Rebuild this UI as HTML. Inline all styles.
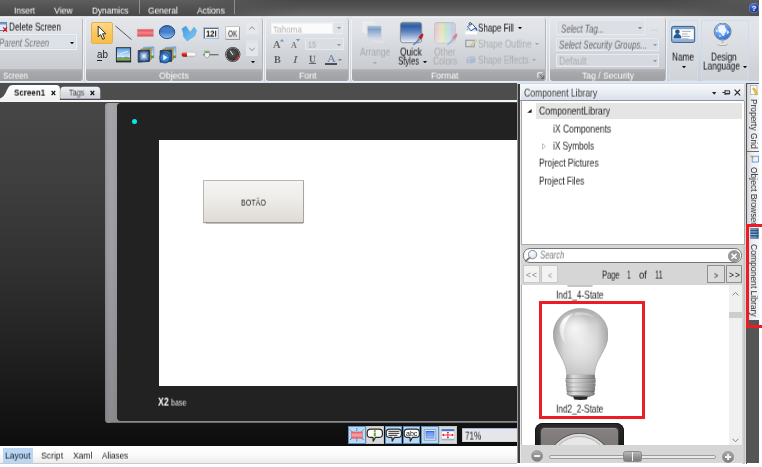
<!DOCTYPE html>
<html><head><meta charset="utf-8"><title>iX Developer</title>
<style>
*{box-sizing:border-box;margin:0;padding:0}
html,body{width:762px;height:467px;overflow:hidden;background:#fff;font-family:"Liberation Sans",sans-serif;font-size:10px;color:#000}
#root{position:relative;width:762px;height:467px;overflow:hidden;background:#fff}
.a{position:absolute;display:block}
.t{position:absolute;display:block;white-space:pre;transform-origin:0 50%;line-height:16px;will-change:transform}
</style></head><body>
<div id="root">
<div class="a" style="left:0px;top:0px;width:759px;height:16.6px;background:linear-gradient(#484848 0,#505051 35%,#626264 75%,#6e6e70 100%);"></div>
<div class="a" style="left:0px;top:0px;width:759px;height:16.6px;background:linear-gradient(#5e5e5e 0,#555 35%,#4c4c4c 75%,#484848 100%);-webkit-mask-image:linear-gradient(90deg,#000 0,#000 190px,rgba(0,0,0,0) 300px,rgba(0,0,0,0) 660px,rgba(0,0,0,0.8) 759px);mask-image:linear-gradient(90deg,#000 0,#000 190px,rgba(0,0,0,0) 300px,rgba(0,0,0,0) 660px,rgba(0,0,0,0.8) 759px)"></div>
<span class="t" style="left:14.00px;top:2.00px;font-size:9.5px;color:#fff;transform:scale(0.884,1.05);">Insert</span>
<span class="t" style="left:54.30px;top:2.00px;font-size:9.5px;color:#fff;transform:scale(0.916,1.05);">View</span>
<span class="t" style="left:92.30px;top:2.00px;font-size:9.5px;color:#fff;transform:scale(0.873,1.05);">Dynamics</span>
<span class="t" style="left:148.00px;top:2.00px;font-size:9.5px;color:#fff;transform:scale(0.882,1.05);">General</span>
<span class="t" style="left:197.20px;top:2.00px;font-size:9.5px;color:#fff;transform:scale(0.892,1.05);">Actions</span>
<div class="a" style="left:138.7px;top:0px;width:1px;height:13.5px;background:#8e8e8e;"></div>
<div class="a" style="left:234.2px;top:0px;width:1px;height:13.5px;background:#8e8e8e;"></div>
<svg class="a" style="left:749px;top:3px;" width="10" height="10" viewBox="0 0 10 10"><defs><radialGradient id="hg" cx="0.4" cy="0.3" r="0.8"><stop offset="0" stop-color="#5a7fe0"/><stop offset="0.6" stop-color="#1c3fb0"/><stop offset="1" stop-color="#0c2470"/></radialGradient></defs><circle cx="5" cy="5" r="4.8" fill="url(#hg)" stroke="#aab8e0" stroke-width="0.5"/><text x="5" y="8.2" font-size="8" font-weight="bold" text-anchor="middle" fill="#fff" font-family="Liberation Sans">?</text></svg>
<div class="a" style="left:0px;top:16.4px;width:759px;height:64.6px;background:linear-gradient(#d6dae0 0,#e3e6ea 2.5%,#e1e4e8 3%,#dfe2e6 30%,#d6d9de 60%,#cfd2d7 80%,#cdd0d5 100%);"></div>
<div class="a" style="left:0px;top:80.7px;width:759px;height:2.7px;background:#dbe5f4;"></div>
<div class="a" style="left:0px;top:83.3px;width:518px;height:16.5px;background:#4d4d4d;"></div>
<div class="a" style="left:0px;top:99.6px;width:517px;height:2.6px;background:#f4f4f4;"></div>
<svg class="a" style="left:0px;top:84px;" width="62" height="17" viewBox="0 0 62 17"><defs><linearGradient id="tg" x1="0" y1="0" x2="0" y2="1"><stop offset="0" stop-color="#fff"/><stop offset="1" stop-color="#f1f1f1"/></linearGradient></defs><path d="M0 14.5 C4 13 5 10 7.5 5 C9 1.8 10.5 0.9 13 0.9 L56 0.9 Q59.9 0.9 59.9 4.5 L59.9 17 L0 17 Z" fill="url(#tg)"/></svg>
<span class="t" style="left:14.40px;top:84.00px;font-size:9.5px;color:#111;font-weight:bold;transform:scale(0.841,1.05);">Screen1</span>
<svg class="a" style="left:51.4px;top:89.6px;" width="5" height="6" viewBox="0 0 5 6"><path d="M0.6 0.8 L4.2 5.2 M4.2 0.8 L0.6 5.2" stroke="#111" stroke-width="1.3" fill="none"/></svg>
<svg class="a" style="left:60px;top:86px;" width="41" height="13" viewBox="0 0 41 13"><defs><linearGradient id="tg2" x1="0" y1="0" x2="0" y2="1"><stop offset="0" stop-color="#eef0f4"/><stop offset="1" stop-color="#cdd1d9"/></linearGradient></defs><path d="M0.6 12.3 L0.6 4 Q0.6 1 3.6 1 L36.9 1 Q39.9 1 39.9 4 L39.9 12.3 Z" fill="url(#tg2)" stroke="#f4f6fa" stroke-width="0.6"/></svg>
<span class="t" style="left:69.00px;top:84.00px;font-size:9.5px;color:#444;transform:scale(0.767,1.05);">Tags</span>
<svg class="a" style="left:90px;top:89.6px;" width="5" height="6" viewBox="0 0 5 6"><path d="M0.6 0.8 L4.2 5.2 M4.2 0.8 L0.6 5.2" stroke="#111" stroke-width="1.3" fill="none"/></svg>
<div class="a" style="left:-5px;top:18px;width:87.7px;height:62.7px;border-radius:3px;background:linear-gradient(#e4e6ea 0,#dee1e5 25%,#d3d6db 52%,#c9ccd1 80%);box-shadow:0 0 0 1px #eef0f3;border-right:1px solid #b4b7bc;overflow:hidden"><div class="a" style="left:0;right:0;top:50.5px;height:12.2px;width:87.7px;background:linear-gradient(#b4b6b9 0,#a6a8ab 30%,#9fa1a4 100%)"></div></div>
<span class="t" style="left:3.00px;top:67.00px;font-size:9.5px;color:#fff;transform:scale(0.831,1.05);">Screen</span>
<svg class="a" style="left:0px;top:21px;" width="8" height="12" viewBox="0 0 8 12"><rect x="-3" y="1.5" width="9.5" height="8" fill="#dfeaf7" stroke="#5d7fae" stroke-width="1"/><rect x="-3" y="1.5" width="9.5" height="2" fill="#6d95cf"/><path d="M3.2 6.4 L7 10.6 M7 6.4 L3.2 10.6" stroke="#e01010" stroke-width="1.3"/></svg>
<span class="t" style="left:9.00px;top:19.00px;font-size:9.6px;color:#111;transform:scale(0.855,1.05);">Delete Screen</span>
<div class="a" style="left:-3px;top:34.3px;width:80px;height:15.7px;background:#dde1e8;border:1px solid #eef1f6;box-shadow:inset 0 0 0 0.5px #cfd6e2"></div>
<span class="t" style="left:0.00px;top:35.00px;font-size:9.6px;color:#7a7a7a;font-style:italic;transform:scale(0.815,1.05);margin-left:-1px;">Parent Screen</span>
<svg class="a" style="left:70.2px;top:41.6px;" width="4.0" height="2.4" viewBox="0 0 4 2.4"><path d="M0 0 L4 0 L2 2.4 Z" fill="#111"/></svg>
<div class="a" style="left:86px;top:18px;width:176.5px;height:62.7px;border-radius:3px;background:linear-gradient(#e4e6ea 0,#dee1e5 25%,#d3d6db 52%,#c9ccd1 80%);box-shadow:0 0 0 1px #eef0f3;border-right:1px solid #b4b7bc;overflow:hidden"><div class="a" style="left:0;right:0;top:50.5px;height:12.2px;width:176.5px;background:linear-gradient(#b4b6b9 0,#a6a8ab 30%,#9fa1a4 100%)"></div></div>
<span class="t" style="left:159.30px;top:67.00px;font-size:9.5px;color:#fff;transform:scale(0.922,1.05);">Objects</span>
<div class="a" style="left:91px;top:22px;width:22px;height:22px;background:linear-gradient(#fdd98c,#fbc75c 50%,#f9be48);border:1px solid #e3b24a;border-radius:2px"></div>
<svg class="a" style="left:96px;top:25px;" width="12" height="16" viewBox="0 0 12 16"><path d="M2.2 1 L2.2 11.8 L4.7 9.5 L6.7 14.3 L8.6 13.5 L6.6 8.8 L9.9 8.8 Z" fill="#fff" stroke="#333" stroke-width="1" stroke-linejoin="round"/></svg>
<svg class="a" style="left:113px;top:22px;" width="22" height="22" viewBox="0 0 22 22"><path d="M2.5 4 L18.5 17.6" stroke="#555" stroke-width="1"/></svg>
<svg class="a" style="left:135px;top:22px;" width="22" height="22" viewBox="0 0 22 22"><defs><linearGradient id="rr" x1="0" y1="0" x2="0" y2="1"><stop offset="0" stop-color="#e8424c"/><stop offset="0.5" stop-color="#f0868c"/><stop offset="1" stop-color="#e8424c"/></linearGradient></defs><rect x="2.2" y="7.2" width="16.2" height="7.4" fill="url(#rr)" stroke="#c7a5a8" stroke-width="0.6"/></svg>
<svg class="a" style="left:157px;top:22px;" width="22" height="22" viewBox="0 0 22 22"><defs><linearGradient id="be" x1="0" y1="0" x2="0" y2="1"><stop offset="0" stop-color="#2c5ca6"/><stop offset="0.45" stop-color="#3f78c4"/><stop offset="0.8" stop-color="#6fa8e4"/><stop offset="1" stop-color="#8cc0f0"/></linearGradient></defs><ellipse cx="10.05" cy="10.1" rx="7.7" ry="6.5" fill="url(#be)" stroke="#21427c" stroke-width="0.9"/><ellipse cx="10.05" cy="7.2" rx="5.6" ry="2.6" fill="#5a8fd4" opacity="0.45"/></svg>
<svg class="a" style="left:179px;top:22px;" width="22" height="22" viewBox="0 0 22 22"><defs><linearGradient id="bp" x1="0" y1="0" x2="1" y2="1"><stop offset="0" stop-color="#3f9ae0"/><stop offset="1" stop-color="#86ccf6"/></linearGradient></defs><path d="M2.9 6.8 L6.9 4.1 L11.2 10.4 L15 5.2 L17.6 8.4 L15.6 14 L12.4 15.9 L8.2 19 L4.5 14.6 L4.2 10.6 Z" fill="url(#bp)" stroke="#4a9ad8" stroke-width="0.5" stroke-linejoin="round"/></svg>
<div class="a" style="left:202.5px;top:26.9px;width:16.3px;height:12.2px;background:#fff;border:1px solid #9fbfe6;box-shadow:inset 1px 1px 0 0 #6a6a6a,inset -1px -1px 0 0 #e4e4e4"></div>
<span class="t" style="left:205.60px;top:25.00px;font-size:8.6px;color:#000;font-weight:bold;transform:scale(0.887,1.05);">12I</span>
<div class="a" style="left:225px;top:25.5px;width:14.5px;height:14.5px;background:linear-gradient(#fff,#f1f1f1 50%,#dedede);border:1px solid #c4c4c4;border-right-color:#9a9a9a;border-bottom-color:#9a9a9a;border-radius:1.5px"></div>
<span class="t" style="left:228.00px;top:26.00px;font-size:7.8px;color:#222;transform:scale(0.825,1.05);">OK</span>
<div class="a" style="left:245.8px;top:22px;width:12px;height:11.8px;background:#e6e8ec;"></div>
<svg class="a" style="left:245.8px;top:22px;" width="12" height="11.8" viewBox="0 0 12 11.8"><path d="M3.4 7.6 L6 4.6 L8.6 7.6" stroke="#888" stroke-width="0.9" fill="none"/></svg>
<div class="a" style="left:245.8px;top:39.6px;width:12px;height:3.4px;background:#e0e2e6;"></div>
<div class="a" style="left:245.8px;top:43px;width:12px;height:13px;background:#e4e6ea;"></div>
<svg class="a" style="left:245.8px;top:43px;" width="12" height="13" viewBox="0 0 12 13"><path d="M3.4 4.8 L6 7.8 L8.6 4.8" stroke="#888" stroke-width="0.9" fill="none"/></svg>
<svg class="a" style="left:250.7px;top:60.9px;" width="4.0" height="2.4" viewBox="0 0 4 2.4"><path d="M0 0 L4 0 L2 2.4 Z" fill="#111"/></svg>
<span class="t" style="left:96.50px;top:47.00px;font-size:9.8px;color:#222;transform:scale(1.000,1.05);">ab</span>
<div class="a" style="left:96.5px;top:60px;width:5px;height:0.9px;background:#222;"></div>
<svg class="a" style="left:115px;top:46px;" width="18" height="17" viewBox="0 0 18 17"><defs><linearGradient id="sky" x1="0" y1="0" x2="0" y2="1"><stop offset="0" stop-color="#5a9ee6"/><stop offset="0.75" stop-color="#d8ecfb"/><stop offset="1" stop-color="#eef6fd"/></linearGradient></defs><rect x="0.9" y="1.2" width="15.2" height="15.2" fill="#2a2a2a"/><rect x="1.9" y="2.2" width="13.2" height="12" fill="url(#sky)"/><path d="M1.9 11.6 Q5 10.4 8 11.4 Q11 10.2 15.1 11.4 L15.1 14.2 L1.9 14.2 Z" fill="#7d8a96"/><path d="M1.9 12.8 Q8 11.8 15.1 12.8 L15.1 14.2 L1.9 14.2 Z" fill="#6cb43c"/><path d="M5 8.4 Q9 5.4 13 5.6" stroke="#fff" stroke-width="0.9" opacity="0.75" fill="none"/></svg>
<svg class="a" style="left:136.5px;top:46px;" width="18" height="18" viewBox="0 0 18 18"><defs><radialGradient id="sk2" cx="0.5" cy="0.5" r="0.6"><stop offset="0" stop-color="#f4f8fc"/><stop offset="0.35" stop-color="#8fb0d4"/><stop offset="0.75" stop-color="#2f5488"/><stop offset="1" stop-color="#1f3c68"/></radialGradient><linearGradient id="sk3" x1="0" y1="0" x2="0" y2="1"><stop offset="0" stop-color="#6fb0ea"/><stop offset="0.7" stop-color="#cfe6f8"/><stop offset="0.8" stop-color="#5d9a3c"/><stop offset="1" stop-color="#3f7a2c"/></linearGradient></defs><path d="M6.4 1.4 L16.8 0.8 L16.8 11.8 L6.4 12.4 Z" fill="url(#sk3)" stroke="#5f88b0" stroke-width="0.5"/><path d="M3.8 3 L14.2 2.4 L14.2 13.6 L3.8 14.2 Z" fill="#c9a040" stroke="#8a7434" stroke-width="0.5"/><path d="M1.2 4.6 L12.6 4 L12.6 15.4 L1.2 16.2 Z" fill="url(#sk2)" stroke="#1c3558" stroke-width="0.8"/><path d="M3 14.4 L10.8 5.8 M3 6.4 L10.8 13.8" stroke="#fff" stroke-width="0.7" opacity="0.55"/></svg>
<svg class="a" style="left:158.5px;top:46px;" width="18" height="18" viewBox="0 0 18 18"><defs><radialGradient id="sk2" cx="0.5" cy="0.5" r="0.6"><stop offset="0" stop-color="#f4f8fc"/><stop offset="0.35" stop-color="#8fb0d4"/><stop offset="0.75" stop-color="#2f5488"/><stop offset="1" stop-color="#1f3c68"/></radialGradient><linearGradient id="sk3" x1="0" y1="0" x2="0" y2="1"><stop offset="0" stop-color="#6fb0ea"/><stop offset="0.7" stop-color="#cfe6f8"/><stop offset="0.8" stop-color="#5d9a3c"/><stop offset="1" stop-color="#3f7a2c"/></linearGradient></defs><path d="M6.4 1.4 L16.8 0.8 L16.8 11.8 L6.4 12.4 Z" fill="url(#sk3)" stroke="#5f88b0" stroke-width="0.5"/><path d="M3.8 3 L14.2 2.4 L14.2 13.6 L3.8 14.2 Z" fill="#c9a040" stroke="#8a7434" stroke-width="0.5"/><path d="M1.2 4.6 L12.6 4 L12.6 15.4 L1.2 16.2 Z" fill="url(#sk2)" stroke="#1c3558" stroke-width="0.8"/><circle cx="5.9" cy="11.8" r="5.3" fill="#245fb0" stroke="#1a4684" stroke-width="0.6"/><circle cx="5.9" cy="11.4" r="4.2" fill="#3f86d8"/><path d="M4.3 8.8 L8.6 11.5 L4.3 14.2 Z" fill="#fff"/></svg>
<svg class="a" style="left:180px;top:48px;" width="18" height="12" viewBox="0 0 18 12"><defs><linearGradient id="pl" x1="0" y1="0" x2="0" y2="1"><stop offset="0" stop-color="#fff"/><stop offset="0.6" stop-color="#f4f4f4"/><stop offset="1" stop-color="#c8c8c8"/></linearGradient><linearGradient id="plr" x1="0" y1="0" x2="0" y2="1"><stop offset="0" stop-color="#f08a84"/><stop offset="0.5" stop-color="#d8221c"/><stop offset="1" stop-color="#a81410"/></linearGradient></defs><rect x="1.6" y="4.3" width="14.4" height="4.4" rx="2.2" fill="url(#pl)" stroke="#a9a9a9" stroke-width="0.5"/><path d="M3.8 4.3 L7 4.3 L7 8.7 L3.8 8.7 A2.2 2.2 0 0 1 3.8 4.3 Z" fill="url(#plr)"/></svg>
<svg class="a" style="left:201px;top:48px;" width="20" height="13" viewBox="0 0 20 13"><path d="M2 6.7 L17.5 6.7" stroke="#777" stroke-width="1.4"/><path d="M3.6 3.2 L8.4 3.2 L8.4 7.8 L6 10.4 L3.6 7.8 Z" fill="#f2f2f2" stroke="#8a8a8a" stroke-width="0.7"/><rect x="4.2" y="3.3" width="3.6" height="1.8" fill="#4fb83c"/></svg>
<svg class="a" style="left:224px;top:46px;" width="18" height="18" viewBox="0 0 18 18"><defs><radialGradient id="gg" cx="0.5" cy="0.4" r="0.6"><stop offset="0" stop-color="#5a5a5a"/><stop offset="1" stop-color="#2e2e2e"/></radialGradient></defs><circle cx="8.8" cy="8.5" r="7.6" fill="#2b2b2b"/><circle cx="8.8" cy="8.5" r="6.6" fill="none" stroke="#aaa" stroke-width="0.8"/><circle cx="8.8" cy="8.5" r="5.9" fill="url(#gg)"/><path d="M14.3 9.5 A5.6 5.6 0 0 1 11.6 13.4" stroke="#d82020" stroke-width="1.5" fill="none"/><path d="M8.8 8.8 L6.2 4.6" stroke="#fff" stroke-width="1"/></svg>
<div class="a" style="left:266px;top:18px;width:83.19999999999999px;height:62.7px;border-radius:3px;background:linear-gradient(#e4e6ea 0,#dee1e5 25%,#d3d6db 52%,#c9ccd1 80%);box-shadow:0 0 0 1px #eef0f3;border-right:1px solid #b4b7bc;overflow:hidden"><div class="a" style="left:0;right:0;top:50.5px;height:12.2px;width:83.19999999999999px;background:linear-gradient(#b4b6b9 0,#a6a8ab 30%,#9fa1a4 100%)"></div></div>
<span class="t" style="left:298.70px;top:67.00px;font-size:9.5px;color:#fff;transform:scale(0.921,1.05);">Font</span>
<div class="a" style="left:270.5px;top:21.9px;width:72.8px;height:12.4px;background:#dfe2e7;border:1px solid #e9ecf1"></div>
<div class="a" style="left:271.2px;top:22.6px;width:61.6px;height:11px;background:#fbfbfc;border:1px solid #f0f2f5"></div>
<span class="t" style="left:273.00px;top:21.00px;font-size:9.5px;color:#b4b4b4;transform:scale(0.858,1.05);">Tahoma</span>
<svg class="a" style="left:337.0px;top:27.1px;" width="4.0" height="2.4" viewBox="0 0 4 2.4"><path d="M0 0 L4 0 L2 2.4 Z" fill="#999"/></svg>
<span class="t" style="left:272.60px;top:37.00px;font-size:10.5px;color:#6d6d6d;font-family:'Liberation Serif',serif;font-weight:bold;transform:scale(1.002,1.05);">A</span>
<svg class="a" style="left:279.6px;top:38.6px;" width="4" height="3" viewBox="0 0 4 3"><path d="M0 2.6 L2 0 L4 2.6 Z" fill="#6f8fd0"/></svg>
<span class="t" style="left:290.80px;top:38.00px;font-size:8px;color:#777;font-family:'Liberation Serif',serif;font-weight:bold;transform:scale(1.004,1.05);">A</span>
<svg class="a" style="left:295.6px;top:38.8px;" width="4" height="3" viewBox="0 0 4 3"><path d="M0 0 L4 0 L2 2.6 Z" fill="#6f8fd0"/></svg>
<div class="a" style="left:305.3px;top:37.6px;width:38.7px;height:12.5px;background:#dadde2;border:1px solid #e6e9ee"></div>
<span class="t" style="left:308.30px;top:36.00px;font-size:9.5px;color:#aaa;transform:scale(0.767,1.05);">15</span>
<svg class="a" style="left:337.0px;top:43.5px;" width="4.0" height="2.4" viewBox="0 0 4 2.4"><path d="M0 0 L4 0 L2 2.4 Z" fill="#999"/></svg>
<span class="t" style="left:273.60px;top:52.00px;font-size:9.4px;color:#5e5e5e;font-family:'Liberation Serif',serif;font-weight:bold;transform:scale(1.085,1.05);">B</span>
<span class="t" style="left:292.80px;top:52.00px;font-size:9.4px;color:#5e5e5e;font-family:'Liberation Serif',serif;font-style:italic;transform:scale(1.469,1.05);">I</span>
<span class="t" style="left:309.20px;top:51.00px;font-size:9.2px;color:#5e5e5e;font-family:'Liberation Serif',serif;font-weight:bold;transform:scale(0.993,1.05);">U</span>
<div class="a" style="left:309.4px;top:63.2px;width:6.2px;height:0.9px;background:#666;"></div>
<span class="t" style="left:326.80px;top:51.00px;font-size:10.6px;color:#6f84b4;font-family:'Liberation Serif',serif;transform:scale(1.150,1.05);">A</span>
<div class="a" style="left:325px;top:62.8px;width:11.8px;height:2.2px;background:#4c4c55;"></div>
<svg class="a" style="left:338.3px;top:58.7px;" width="4.0" height="2.4" viewBox="0 0 4 2.4"><path d="M0 0 L4 0 L2 2.4 Z" fill="#888"/></svg>
<div class="a" style="left:351.7px;top:18px;width:194.3px;height:62.7px;border-radius:3px;background:linear-gradient(#e4e6ea 0,#dee1e5 25%,#d3d6db 52%,#c9ccd1 80%);box-shadow:0 0 0 1px #eef0f3;border-right:1px solid #b4b7bc;overflow:hidden"><div class="a" style="left:0;right:0;top:50.5px;height:12.2px;width:194.3px;background:linear-gradient(#b4b6b9 0,#a6a8ab 30%,#9fa1a4 100%)"></div></div>
<span class="t" style="left:430.50px;top:67.00px;font-size:9.5px;color:#fff;transform:scale(0.911,1.05);">Format</span>
<svg class="a" style="left:537px;top:71.5px;" width="9" height="8" viewBox="0 0 9 8"><path d="M0.8 5.6 L0.8 0.8 L5.6 0.8" stroke="#f4f4f4" stroke-width="1" fill="none"/><path d="M3 3 L6.6 6.4 M6.8 3.6 L6.8 6.6 L3.8 6.6" stroke="#666" stroke-width="1" fill="none"/></svg>
<svg class="a" style="left:361px;top:21px;" width="27" height="24" viewBox="0 0 27 24"><defs><linearGradient id="ar" x1="0" y1="0" x2="0" y2="1"><stop offset="0" stop-color="#b9c8de"/><stop offset="0.28" stop-color="#7f9fc8"/><stop offset="0.6" stop-color="#a9bcd9"/><stop offset="1" stop-color="#d6dcea"/></linearGradient></defs><rect x="13.4" y="11.2" width="11.4" height="11.4" rx="1.6" fill="#b4b6ba" opacity="0.7"/><rect x="13" y="10.8" width="11.2" height="11.2" rx="1.6" fill="#dedfe3" stroke="#ecedef" stroke-width="0.7"/><rect x="2.1" y="1.2" width="11.5" height="10.2" rx="1.5" fill="#e8e9eb" stroke="#f4f4f5" stroke-width="0.8"/><rect x="6.8" y="4.9" width="14.2" height="13.8" rx="1.4" fill="#b9bbc0" opacity="0.6"/><rect x="6.2" y="4.4" width="14.2" height="13.8" rx="1.4" fill="url(#ar)" stroke="#dfe3ea" stroke-width="0.7"/></svg>
<span class="t" style="left:360.00px;top:44.00px;font-size:9.6px;color:#a9a9a9;transform:scale(0.887,1.05);">Arrange</span>
<svg class="a" style="left:373.3px;top:61.5px;" width="4.0" height="2.4" viewBox="0 0 4 2.4"><path d="M0 0 L4 0 L2 2.4 Z" fill="#aaa"/></svg>
<svg class="a" style="left:399px;top:21px;" width="26" height="26" viewBox="0 0 26 26"><defs><linearGradient id="qs" x1="0" y1="0" x2="0" y2="1"><stop offset="0" stop-color="#5f7fb4"/><stop offset="0.18" stop-color="#2b5da6"/><stop offset="0.45" stop-color="#5b82bd"/><stop offset="1" stop-color="#eef1f8"/></linearGradient></defs><rect x="1.4" y="1.3" width="21.3" height="20.4" rx="2.6" fill="url(#qs)" stroke="#8a8a8a" stroke-width="0.9"/><path d="M24 12.6 Q25.4 14.8 21.8 18.6 L19.4 16.8 Q21.4 12.8 24 12.6 Z" fill="#b8202a"/><path d="M19.4 16.8 L21.8 18.6 L19.6 20.8 L17.8 19.4 Z" fill="#8c8c94"/><path d="M17.8 19.4 L19.6 20.8 L14.8 24.6 L13.8 23.6 Z" fill="#5f87c8"/></svg>
<span class="t" style="left:399.70px;top:44.00px;font-size:9.6px;color:#111;transform:scale(0.888,1.05);">Quick</span>
<span class="t" style="left:398.00px;top:53.00px;font-size:9.6px;color:#111;transform:scale(0.811,1.05);">Styles</span>
<svg class="a" style="left:422.5px;top:61.1px;" width="4.0" height="2.4" viewBox="0 0 4 2.4"><path d="M0 0 L4 0 L2 2.4 Z" fill="#111"/></svg>
<svg class="a" style="left:433px;top:21px;" width="26" height="26" viewBox="0 0 26 26"><defs><linearGradient id="oc" x1="0" y1="0" x2="1" y2="0"><stop offset="0" stop-color="#e3c3cc"/><stop offset="0.18" stop-color="#e8cfd0"/><stop offset="0.22" stop-color="#ead9c4"/><stop offset="0.38" stop-color="#e6e2bc"/><stop offset="0.42" stop-color="#d6e4bf"/><stop offset="0.58" stop-color="#c4e0c8"/><stop offset="0.62" stop-color="#bfe0dc"/><stop offset="0.78" stop-color="#bfd6e8"/><stop offset="0.82" stop-color="#c3cbe6"/><stop offset="1" stop-color="#cfc8e2"/></linearGradient><linearGradient id="ocv" x1="0" y1="0" x2="0" y2="1"><stop offset="0" stop-color="#bbb" stop-opacity="0.35"/><stop offset="0.3" stop-color="#fff" stop-opacity="0"/><stop offset="1" stop-color="#fff" stop-opacity="0.3"/></linearGradient></defs><rect x="1.5" y="1.5" width="20.8" height="20.4" rx="2.6" fill="url(#oc)" stroke="#c2c2c4" stroke-width="0.9"/><rect x="1.5" y="1.5" width="20.8" height="20.4" rx="2.6" fill="url(#ocv)"/><path d="M24 12.6 Q25.4 14.8 21.8 18.6 L19.4 16.8 Q21.4 12.8 24 12.6 Z" fill="#d28890"/><path d="M19.4 16.8 L21.8 18.6 L19.6 20.8 L17.8 19.4 Z" fill="#b4b4ba"/><path d="M17.8 19.4 L19.6 20.8 L14.8 24.6 L13.8 23.6 Z" fill="#a2b8de"/></svg>
<span class="t" style="left:433.50px;top:44.00px;font-size:9.6px;color:#ababab;transform:scale(0.895,1.05);">Other</span>
<span class="t" style="left:432.80px;top:53.00px;font-size:9.6px;color:#ababab;transform:scale(0.872,1.05);">Colors</span>
<svg class="a" style="left:464.5px;top:21.5px;" width="13" height="13" viewBox="0 0 13 13"><rect x="0.3" y="9.4" width="11.8" height="3" fill="#fff"/><path d="M2.6 4.6 L7 1.6 L10.6 5.8 L6 8.8 Z" fill="#f6f9ff" stroke="#27498f" stroke-width="0.9" stroke-linejoin="round"/><path d="M2.6 4.6 L7 1.6 L7.8 2.6 L3.6 5.6 Z" fill="#9fb6e0"/><path d="M4.4 3.2 Q3.4 0.6 5.2 0.5 Q6.6 0.6 6.4 2.6" stroke="#1c2c5a" stroke-width="0.8" fill="none"/><path d="M10.4 5 Q12.6 6.2 12.4 8.6 Q11.2 9 10.6 7.4 Q10.2 6.2 9.4 6.2 Z" fill="#2a5fd0"/><path d="M2.2 6.4 Q1.2 7.6 2.2 8 Q3 7.4 2.2 6.4 Z" fill="#2a5fd0"/></svg>
<span class="t" style="left:478.30px;top:20.00px;font-size:9.6px;color:#111;transform:scale(0.841,1.05);">Shape Fill</span>
<svg class="a" style="left:517.6px;top:26.8px;" width="4.0" height="2.4" viewBox="0 0 4 2.4"><path d="M0 0 L4 0 L2 2.4 Z" fill="#111"/></svg>
<svg class="a" style="left:465px;top:38px;" width="13" height="11" viewBox="0 0 13 11"><rect x="0.8" y="2.2" width="8.4" height="6.6" fill="none" stroke="#8d8d8d" stroke-width="0.9"/><path d="M6 6.6 L10.6 1.6 L11.8 2.8 L7.2 7.6 L5.6 8 Z" fill="#e8d9a6" stroke="#b9a878" stroke-width="0.5"/></svg>
<span class="t" style="left:478.30px;top:36.00px;font-size:9.6px;color:#adadad;transform:scale(0.883,1.05);">Shape Outline</span>
<svg class="a" style="left:534.9px;top:42.9px;" width="4.0" height="2.4" viewBox="0 0 4 2.4"><path d="M0 0 L4 0 L2 2.4 Z" fill="#aaa"/></svg>
<svg class="a" style="left:465px;top:54px;" width="12" height="11" viewBox="0 0 12 11"><path d="M1.4 3.6 L8 2 L10.6 3 L10.6 8.4 L4 10 L1.4 9 Z" fill="#a9b6cf" stroke="#c0c8d8" stroke-width="0.6" opacity="0.85"/><path d="M1.4 3.6 L4 4.6 L10.6 3 M4 4.6 L4 10" stroke="#d5dcea" stroke-width="0.6" fill="none"/></svg>
<span class="t" style="left:478.30px;top:52.00px;font-size:9.6px;color:#adadad;transform:scale(0.851,1.05);">Shape Effects</span>
<svg class="a" style="left:532.0px;top:58.7px;" width="4.0" height="2.4" viewBox="0 0 4 2.4"><path d="M0 0 L4 0 L2 2.4 Z" fill="#aaa"/></svg>
<div class="a" style="left:549.5px;top:18px;width:116.5px;height:62.7px;border-radius:3px;background:linear-gradient(#e4e6ea 0,#dee1e5 25%,#d3d6db 52%,#c9ccd1 80%);box-shadow:0 0 0 1px #eef0f3;border-right:1px solid #b4b7bc;overflow:hidden"><div class="a" style="left:0;right:0;top:50.5px;height:12.2px;width:116.5px;background:linear-gradient(#b4b6b9 0,#a6a8ab 30%,#9fa1a4 100%)"></div></div>
<span class="t" style="left:581.90px;top:67.00px;font-size:9.5px;color:#fff;transform:scale(0.905,1.05);">Tag / Security</span>
<div class="a" style="left:555.8px;top:20.1px;width:89.6px;height:14.9px;background:#dcdfe5;border:1px solid #e7ebf1;"></div>
<span class="t" style="left:560.80px;top:21.00px;font-size:9.6px;color:#6c6c6c;font-style:italic;transform:scale(0.815,1.05);">Select Tag...</span>
<svg class="a" style="left:638.3px;top:27.2px;" width="4.0" height="2.4" viewBox="0 0 4 2.4"><path d="M0 0 L4 0 L2 2.4 Z" fill="#888"/></svg>
<span class="t" style="left:650.60px;top:19.00px;font-size:9px;color:#b9bbbf;transform:scale(0.933,1.05);">...</span>
<div class="a" style="left:555.8px;top:37.8px;width:103.4px;height:13.5px;background:#dadde3;border:1px solid #e7ebf1;"></div>
<span class="t" style="left:558.50px;top:37.00px;font-size:9.6px;color:#6c6c6c;font-style:italic;transform:scale(0.830,1.05);">Select Security Groups...</span>
<svg class="a" style="left:652.7px;top:43.5px;" width="4.0" height="2.4" viewBox="0 0 4 2.4"><path d="M0 0 L4 0 L2 2.4 Z" fill="#999"/></svg>
<div class="a" style="left:555.8px;top:53.6px;width:103.4px;height:13.3px;background:#d6d9df;border:1px solid #e7ebf1;"></div>
<span class="t" style="left:558.50px;top:53.00px;font-size:9.6px;color:#ababab;transform:scale(0.904,1.05);">Default</span>
<svg class="a" style="left:652.7px;top:59.6px;" width="4.0" height="2.4" viewBox="0 0 4 2.4"><path d="M0 0 L4 0 L2 2.4 Z" fill="#999"/></svg>
<div class="a" style="left:668.5px;top:20px;width:29.8px;height:60.5px;background:linear-gradient(#e2e5e9,#d9dce1 50%,#d0d3d8);border:1px solid #cfdcee;border-radius:2px;"></div>
<svg class="a" style="left:671px;top:25px;" width="25" height="19" viewBox="0 0 25 19"><rect x="0.7" y="1.4" width="23" height="16" rx="1.6" fill="#7fa5cf" stroke="#3a5f8a" stroke-width="1"/><rect x="1.6" y="4.2" width="21.2" height="10.2" fill="#fafbfd"/><rect x="1.6" y="14.4" width="21.2" height="2.4" fill="#8fb0d8"/><circle cx="6.4" cy="6.8" r="2.3" fill="#1f5a96"/><path d="M2.4 13.6 Q2.4 9 6.4 9 Q10.4 9 10.4 13.6 Z" fill="#1f5a96"/><path d="M11 6.4 L19.8 6.4 M11 9 L16.6 9 M11 11.4 L19 11.4 M11 13.8 L17.6 13.8" stroke="#9a9ea6" stroke-width="0.8"/></svg>
<span class="t" style="left:672.20px;top:49.00px;font-size:9.6px;color:#111;transform:scale(0.859,1.05);">Name</span>
<svg class="a" style="left:681.7px;top:65.5px;" width="4.0" height="2.4" viewBox="0 0 4 2.4"><path d="M0 0 L4 0 L2 2.4 Z" fill="#111"/></svg>
<div class="a" style="left:700.5px;top:20px;width:48.9px;height:60.5px;background:linear-gradient(#e2e5e9,#d9dce1 50%,#d0d3d8);border:1px solid #cfdcee;border-radius:2px;"></div>
<svg class="a" style="left:711px;top:23px;" width="24" height="24" viewBox="0 0 24 24"><defs><radialGradient id="gl" cx="0.4" cy="0.35" r="0.75"><stop offset="0" stop-color="#b4d6ff"/><stop offset="0.45" stop-color="#69a6f4"/><stop offset="0.8" stop-color="#3877e0"/><stop offset="1" stop-color="#2a5fc8"/></radialGradient></defs><ellipse cx="11.6" cy="21.3" rx="5" ry="1.5" fill="#9c9ea2"/><ellipse cx="11.6" cy="20.5" rx="4.8" ry="1.5" fill="#e4e5e7"/><path d="M10.4 17.2 L12.8 17.2 L13.4 20.4 L9.8 20.4 Z" fill="#c9cbce"/><circle cx="11.6" cy="8.6" r="8.5" fill="none" stroke="#55585e" stroke-width="0.7"/><circle cx="11.6" cy="8.6" r="7.9" fill="url(#gl)"/><path d="M7.6 3.2 Q11 1.2 14.2 2.8 Q13.2 4.6 15 5.8 Q16.6 7.2 15 9 Q13.4 9.6 13.6 11.6 Q12.4 14 11 12 Q10.8 9.8 8.8 9.4 Q6.4 8.4 7.4 6.2 Q6.6 4.4 7.6 3.2 Z" fill="#f4f8ff" opacity="0.95"/><path d="M15.8 7.6 Q18 7.4 18.2 9.6 Q17 11.8 15.8 10.4 Z" fill="#e6f0ff" opacity="0.9"/><path d="M4.6 7.4 Q5.8 5.6 7 7 Q6.6 9.6 5.2 9.2 Z" fill="#e6f0ff" opacity="0.85"/><path d="M8 12.2 Q9.6 11.6 10.2 13.4 Q9.2 14.8 8 13.8 Z" fill="#dcebff" opacity="0.7"/></svg>
<span class="t" style="left:710.70px;top:49.00px;font-size:9.6px;color:#111;transform:scale(0.860,1.05);">Design</span>
<span class="t" style="left:703.00px;top:58.00px;font-size:9.6px;color:#111;transform:scale(0.866,1.05);">Language</span>
<svg class="a" style="left:742.5px;top:65.5px;" width="4.0" height="2.4" viewBox="0 0 4 2.4"><path d="M0 0 L4 0 L2 2.4 Z" fill="#111"/></svg>
<div class="a" style="left:0px;top:102.2px;width:517px;height:343.9px;background:linear-gradient(#464646 0,#3f3f3f 22%,#313131 48%,#202020 74%,#0d0d0d 100%);"></div>
<div class="a" style="left:104.5px;top:102.8px;width:420px;height:320.6px;border-radius:3px 0 0 3.5px;background:linear-gradient(90deg,#909094 0,#a2a2a6 2px,#a6a6aa 6px,#a0a0a4 12px);"></div>
<div class="a" style="left:104.5px;top:102.8px;width:12px;height:320.6px;border-radius:3px 0 0 3.5px;background:linear-gradient(rgba(0,0,0,0) 0,rgba(0,0,0,0.05) 50%,rgba(0,0,0,0.16) 100%)"></div>
<div class="a" style="left:110px;top:420.7px;width:407px;height:2.6px;background:linear-gradient(#8e8e92 0,#86868a 50%,#55555a 100%);"></div>
<div class="a" style="left:116.5px;top:102.8px;width:402px;height:317.9px;border-radius:3.5px 0 0 3.5px;background:#222222;"></div>
<div class="a" style="left:131.5px;top:119.2px;width:5px;height:5px;border-radius:50%;background:#00eaf2"></div>
<div class="a" style="left:159px;top:139.7px;width:358px;height:246.3px;background:#fff;"></div>
<div class="a" style="left:203.4px;top:180.2px;width:100.5px;height:42.8px;background:linear-gradient(#f5f4f2 0,#efedea 40%,#dedbd6 100%);border:1px solid #b9b8b5;border-bottom-color:#9a9996;border-right-color:#a6a5a2;box-shadow:0 0.6px 0.8px rgba(0,0,0,0.25)"></div>
<span class="t" style="left:240.90px;top:194.00px;font-size:8.6px;color:#222;transform:scale(0.824,1.05);">BOTÃO</span>
<span class="t" style="left:158.20px;top:394.00px;font-size:10.4px;color:#fff;font-weight:bold;transform:scale(0.849,1.05);">X2</span>
<span class="t" style="left:170.80px;top:394.00px;font-size:8.8px;color:#e4e4e4;transform:scale(0.807,1.05);">base</span>
<div class="a" style="left:348.1px;top:425.8px;width:17.5px;height:18px;background:#b9daf2;border:1px solid #5f8fbe"></div>
<svg class="a" style="left:348.1px;top:425.8px;" width="17.5" height="18" viewBox="0 0 17.5 18"><defs><linearGradient id="rb2" x1="0" y1="0" x2="0" y2="1"><stop offset="0" stop-color="#ea5f6a"/><stop offset="0.5" stop-color="#f6a9ae"/><stop offset="1" stop-color="#ea5f6a"/></linearGradient></defs><rect x="3.4" y="6" width="10.8" height="6.2" fill="url(#rb2)" stroke="#d8525c" stroke-width="0.5"/><path d="M2 3.6 L4.4 6 M15.6 3.6 L13.2 6 M2 14 L4.4 11.6 M15.6 14 L13.2 11.6 M8.8 2 L8.8 5 M8.8 12.4 L8.8 15.6" stroke="#3d5f8f" stroke-width="0.9" stroke-dasharray="1.2 0.6"/></svg>
<div class="a" style="left:366.4px;top:425.8px;width:17.5px;height:18px;background:#dadada;border:1px solid #c4c4c4"></div>
<svg class="a" style="left:366.4px;top:425.8px;" width="17.5" height="18" viewBox="0 0 17.5 18"><path d="M4.6 3.2 L13 3.2 Q16.4 3.2 16.4 6.4 L16.4 8.2 Q16.4 11.4 13 11.4 L9.4 11.4 L7.2 15.2 L7 11.4 L4.6 11.4 Q1.2 11.4 1.2 8.2 L1.2 6.4 Q1.2 3.2 4.6 3.2 Z" fill="#fff" stroke="#2a2a2a" stroke-width="1.2" stroke-linejoin="round"/><circle cx="8.8" cy="5" r="1.1" fill="#5fae1c"/><rect x="7.8" y="6.5" width="2" height="3.8" fill="#5fae1c"/></svg>
<div class="a" style="left:384.6px;top:425.8px;width:17.5px;height:18px;background:#b9daf2;border:1px solid #5f8fbe"></div>
<svg class="a" style="left:384.6px;top:425.8px;" width="17.5" height="18" viewBox="0 0 17.5 18"><path d="M4.6 3.2 L13 3.2 Q16.4 3.2 16.4 6.4 L16.4 8.2 Q16.4 11.4 13 11.4 L9.4 11.4 L7.2 15.2 L7 11.4 L4.6 11.4 Q1.2 11.4 1.2 8.2 L1.2 6.4 Q1.2 3.2 4.6 3.2 Z" fill="#fff" stroke="#2a2a2a" stroke-width="1.2" stroke-linejoin="round"/><path d="M3.4 5.4 L14.4 5.4 M3.4 7.4 L14.4 7.4 M3.4 9.4 L12.4 9.4" stroke="#555" stroke-width="1.1"/></svg>
<div class="a" style="left:402.8px;top:425.8px;width:17.5px;height:18px;background:#b9daf2;border:1px solid #5f8fbe"></div>
<svg class="a" style="left:402.8px;top:425.8px;" width="17.5" height="18" viewBox="0 0 17.5 18"><path d="M4.6 3.2 L13 3.2 Q16.4 3.2 16.4 6.4 L16.4 8.2 Q16.4 11.4 13 11.4 L9.4 11.4 L7.2 15.2 L7 11.4 L4.6 11.4 Q1.2 11.4 1.2 8.2 L1.2 6.4 Q1.2 3.2 4.6 3.2 Z" fill="#fff" stroke="#2a2a2a" stroke-width="1.2" stroke-linejoin="round"/></svg>
<span class="t" style="left:405.80px;top:426.00px;font-size:7px;color:#111;transform:scale(1.010,1.05);">abc</span>
<div class="a" style="left:421.1px;top:425.8px;width:17.5px;height:18px;background:#b9daf2;border:1px solid #5f8fbe"></div>
<svg class="a" style="left:421.1px;top:425.8px;" width="17.5" height="18" viewBox="0 0 17.5 18"><defs><linearGradient id="wb" x1="0" y1="0" x2="0" y2="1"><stop offset="0" stop-color="#2f66e8"/><stop offset="1" stop-color="#8fb4f8"/></linearGradient></defs><rect x="3.2" y="3.6" width="11.6" height="10.6" fill="#dfe6f2" stroke="#8a96ac" stroke-width="0.8"/><rect x="4.6" y="5" width="8.8" height="7.8" fill="url(#wb)"/><path d="M5.6 7 L12.4 7 M5.6 8.8 L12.4 8.8 M5.6 10.6 L12.4 10.6" stroke="#b4ccf8" stroke-width="0.7"/></svg>
<div class="a" style="left:439.3px;top:425.8px;width:17.5px;height:18px;background:#dadada;border:1px solid #c4c4c4"></div>
<svg class="a" style="left:439.3px;top:425.8px;" width="17.5" height="18" viewBox="0 0 17.5 18"><rect x="2.6" y="3.2" width="12.6" height="11" fill="#fff" stroke="#b9c0cf" stroke-width="0.5"/><rect x="2.6" y="3.2" width="12.6" height="2" fill="#3f6fd0"/><rect x="2.6" y="12.6" width="12.6" height="1.6" fill="#9fb2d8"/><path d="M3.6 9 L14.2 9 M8.9 6 L8.9 12" stroke="#e8202c" stroke-width="0.9"/><path d="M3 9 L5 7.6 L5 10.4 Z M14.8 9 L12.8 7.6 L12.8 10.4 Z M8.9 5.4 L7.7 7 L10.1 7 Z M8.9 12.6 L7.7 11 L10.1 11 Z" fill="#e8202c"/></svg>
<div class="a" style="left:461.8px;top:427.5px;width:55.2px;height:14.4px;background:#e4e6ea;border-top:1px solid #9fb4d2;border-left:1px solid #c4cad4;border-bottom:1px solid #d4d8de"></div>
<span class="t" style="left:464.80px;top:428.00px;font-size:9.6px;color:#1c1c1c;transform:scale(0.838,1.05);">71%</span>
<div class="a" style="left:0px;top:446.1px;width:517px;height:16.9px;background:linear-gradient(#ffffff 0,#fbfbfb 50%,#ececec 100%);"></div>
<div class="a" style="left:0px;top:462.6px;width:517px;height:0.9px;background:#c9c9c9;"></div>
<div class="a" style="left:3.4px;top:447.6px;width:29.4px;height:15px;background:#b9d7f5;"></div>
<span class="t" style="left:5.20px;top:447.00px;font-size:9.5px;color:#222;transform:scale(0.894,1.05);">Layout</span>
<span class="t" style="left:40.50px;top:447.00px;font-size:9.5px;color:#222;transform:scale(0.906,1.05);">Script</span>
<span class="t" style="left:72.60px;top:447.00px;font-size:9.5px;color:#222;transform:scale(0.896,1.05);">Xaml</span>
<span class="t" style="left:102.00px;top:447.00px;font-size:9.5px;color:#222;transform:scale(0.856,1.05);">Aliases</span>
<div class="a" style="left:517px;top:83.3px;width:1px;height:380.2px;background:#9a9a9a;"></div>
<div class="a" style="left:518px;top:83.3px;width:1.7px;height:380.2px;background:#3c3c3c;"></div>
<div class="a" style="left:519.7px;top:83.3px;width:1.3px;height:380.2px;background:#e8e8e8;"></div>
<div class="a" style="left:517px;top:80.7px;width:242px;height:2.9px;background:#dbe5f4;"></div>
<div class="a" style="left:521px;top:83.3px;width:225px;height:380.2px;background:#d6d6d6;"></div>
<div class="a" style="left:520px;top:83.6px;width:224.4px;height:16.6px;background:linear-gradient(#f4f7fb 0,#eaeef4 45%,#d9dfe8 100%);border-top:1px solid #f8fafd;border-left:1px solid #f1f4f8"></div>
<div class="a" style="left:520px;top:100px;width:224.4px;height:1.2px;background:#8f949c;"></div>
<span class="t" style="left:523.70px;top:85.00px;font-size:9.6px;color:#3c3c3c;transform:scale(0.898,1.05);">Component Library</span>
<svg class="a" style="left:712.2px;top:92.38px;" width="4.4" height="2.64" viewBox="0 0 4 2.4"><path d="M0 0 L4 0 L2 2.4 Z" fill="#222"/></svg>
<svg class="a" style="left:722px;top:88.5px;" width="9" height="7" viewBox="0 0 9 7"><path d="M0.4 3.5 L3 3.5 M3 1 L3 6 M3 1.8 L7.6 1.8 L7.6 5 L3 5 M3 4.4 L7.6 4.4" stroke="#222" stroke-width="0.9" fill="none"/></svg>
<svg class="a" style="left:734px;top:88.5px;" width="7" height="7" viewBox="0 0 7 7"><path d="M0.6 0.6 L6.2 6.4 M6.2 0.6 L0.6 6.4" stroke="#222" stroke-width="1.1" fill="none"/></svg>
<div class="a" style="left:521px;top:101.2px;width:224px;height:144.2px;background:#fff;border-left:1px solid #a9a9a9;border-right:1px solid #a9a9a9;border-bottom:1px solid #a9a9a9"></div>
<div class="a" style="left:536px;top:103.3px;width:206px;height:15.5px;background:#e5e5e5;"></div>
<svg class="a" style="left:526.5px;top:109.4px;" width="5" height="4" viewBox="0 0 5 4"><path d="M4.6 0 L4.6 3.8 L0.2 3.8 Z" fill="#222"/></svg>
<span class="t" style="left:538.80px;top:103.00px;font-size:9.6px;color:#1f1f1f;transform:scale(0.899,1.05);">ComponentLibrary</span>
<span class="t" style="left:552.80px;top:121.00px;font-size:9.6px;color:#1f1f1f;transform:scale(0.887,1.05);">iX Components</span>
<svg class="a" style="left:542.3px;top:142.6px;" width="4" height="7" viewBox="0 0 4 7"><path d="M0.5 0.6 L3.4 3.4 L0.5 6.2 Z" fill="#fff" stroke="#a6a6a6" stroke-width="0.7"/></svg>
<span class="t" style="left:552.80px;top:138.00px;font-size:9.6px;color:#1f1f1f;transform:scale(0.856,1.05);">iX Symbols</span>
<span class="t" style="left:538.70px;top:155.00px;font-size:9.6px;color:#1f1f1f;transform:scale(0.887,1.05);">Project Pictures</span>
<span class="t" style="left:538.70px;top:173.00px;font-size:9.6px;color:#1f1f1f;transform:scale(0.858,1.05);">Project Files</span>
<div class="a" style="left:522.5px;top:248.3px;width:219.9px;height:14.3px;background:#fff;border:1.1px solid #757575;border-radius:7.1px"></div>
<svg class="a" style="left:523.5px;top:249px;" width="15" height="13" viewBox="0 0 15 13"><defs><radialGradient id="mg" cx="0.4" cy="0.35" r="0.7"><stop offset="0" stop-color="#fff"/><stop offset="1" stop-color="#c9dcf0"/></radialGradient></defs><circle cx="8.6" cy="5.6" r="4.2" fill="url(#mg)" stroke="#8d8f93" stroke-width="1"/><path d="M5.6 8.6 L1.8 12" stroke="#77797d" stroke-width="1.7" stroke-linecap="round"/></svg>
<span class="t" style="left:539.70px;top:247.00px;font-size:9.6px;color:#7a7a7a;font-style:italic;transform:scale(0.799,1.05);">Search</span>
<svg class="a" style="left:727.8px;top:250px;" width="12.4" height="12.4" viewBox="0 0 12.4 12.4"><circle cx="6.1" cy="6.2" r="5.8" fill="#9a9a9a"/><circle cx="6.1" cy="6.2" r="5.8" fill="none" stroke="#828282" stroke-width="0.6"/><path d="M3.6 3.7 L8.6 8.7 M8.6 3.7 L3.6 8.7" stroke="#fff" stroke-width="1.6"/></svg>
<div class="a" style="left:522.6px;top:265px;width:17.2px;height:18.4px;background:#f3f3f3;border:1px solid #c9c9c9"></div>
<div class="a" style="left:541px;top:265px;width:17.2px;height:18.4px;background:#f3f3f3;border:1px solid #c9c9c9"></div>
<span class="t" style="left:526.40px;top:267.00px;font-size:8.4px;color:#8c8c8c;transform:scale(1.019,1.05);letter-spacing:1px;"><<</span>
<span class="t" style="left:547.80px;top:267.00px;font-size:8.4px;color:#8c8c8c;transform:scale(0.856,1.05);"><</span>
<div class="a" style="left:707px;top:265px;width:17.6px;height:18.4px;background:#dcdcdc;border:1px solid #8f8f8f"></div>
<div class="a" style="left:725.6px;top:265px;width:16.8px;height:18.4px;background:#dcdcdc;border:1px solid #8f8f8f"></div>
<span class="t" style="left:713.80px;top:267.00px;font-size:8.4px;color:#222;transform:scale(0.856,1.05);">></span>
<span class="t" style="left:729.20px;top:267.00px;font-size:8.4px;color:#222;transform:scale(1.019,1.05);letter-spacing:1px;">>></span>
<span class="t" style="left:601.70px;top:267.00px;font-size:9.6px;color:#222;transform:scale(0.785,1.05);">Page</span>
<span class="t" style="left:627.40px;top:267.00px;font-size:9.6px;color:#222;transform:scale(0.712,1.05);">1</span>
<span class="t" style="left:639.20px;top:267.00px;font-size:9.6px;color:#222;transform:scale(0.974,1.05);">of</span>
<span class="t" style="left:655.00px;top:267.00px;font-size:9.6px;color:#222;transform:scale(0.783,1.05);">11</span>
<div class="a" style="left:521px;top:284.8px;width:221.4px;height:160.6px;background:#fff;border-left:1px solid #b4b4b4"></div>
<div class="a" style="left:729.4px;top:285px;width:13px;height:160.4px;background:#f0f0f0;"></div>
<div class="a" style="left:729.4px;top:312px;width:13px;height:5.7px;background:#cdcdcd;"></div>
<svg class="a" style="left:729.4px;top:289px;" width="13" height="9" viewBox="0 0 13 9"><path d="M3.6 6.4 L6.5 3.4 L9.4 6.4" stroke="#858585" stroke-width="1" fill="none"/></svg>
<svg class="a" style="left:729.4px;top:435.5px;" width="13" height="9" viewBox="0 0 13 9"><path d="M3.6 2.8 L6.5 5.8 L9.4 2.8" stroke="#858585" stroke-width="1" fill="none"/></svg>
<div class="a" style="left:567px;top:285.4px;width:26px;height:2px;background:#c6c6c6;border-radius:0 0 3px 3px"></div>
<span class="t" style="left:556.00px;top:287.00px;font-size:9.6px;color:#1f1f1f;transform:scale(0.866,1.05);">Ind1_4-State</span>
<svg class="a" style="left:552.6px;top:308.2px;" width="55.2" height="94" viewBox="0 0 55.2 94"><defs>
<radialGradient id="bg1" cx="0.5" cy="0.52" r="0.62" fx="0.5" fy="0.5"><stop offset="0" stop-color="#ececec"/><stop offset="0.35" stop-color="#e0e0e0"/><stop offset="0.7" stop-color="#cbcbcb"/><stop offset="0.9" stop-color="#bcbcbc"/><stop offset="1" stop-color="#adadad"/></radialGradient>
<linearGradient id="bs1" x1="0" y1="0" x2="1" y2="0"><stop offset="0" stop-color="#8e8e8e"/><stop offset="0.25" stop-color="#dedede"/><stop offset="0.5" stop-color="#c2c2c2"/><stop offset="0.8" stop-color="#9a9a9a"/><stop offset="1" stop-color="#7a7a7a"/></linearGradient>
<linearGradient id="bs2" x1="0" y1="0" x2="1" y2="0"><stop offset="0" stop-color="#6e6e6e"/><stop offset="0.3" stop-color="#a8a8a8"/><stop offset="0.6" stop-color="#8c8c8c"/><stop offset="1" stop-color="#5c5c5c"/></linearGradient>
<linearGradient id="hl1" x1="0" y1="1" x2="1" y2="0"><stop offset="0" stop-color="#fff" stop-opacity="0.25"/><stop offset="0.6" stop-color="#fff" stop-opacity="0.95"/><stop offset="1" stop-color="#fff" stop-opacity="0.5"/></linearGradient>
<radialGradient id="hl2" cx="0.5" cy="0.5" r="0.5"><stop offset="0" stop-color="#fff" stop-opacity="0.75"/><stop offset="0.6" stop-color="#fff" stop-opacity="0.3"/><stop offset="1" stop-color="#fff" stop-opacity="0"/></radialGradient><linearGradient id="eg1" x1="0" y1="0" x2="1" y2="0"><stop offset="0" stop-color="#888" stop-opacity="0.5"/><stop offset="0.2" stop-color="#999" stop-opacity="0"/><stop offset="0.8" stop-color="#999" stop-opacity="0"/><stop offset="1" stop-color="#888" stop-opacity="0.45"/></linearGradient><linearGradient id="sh1" x1="0" y1="0" x2="0" y2="1"><stop offset="0" stop-color="#999" stop-opacity="0.55"/><stop offset="0.25" stop-color="#aaa" stop-opacity="0"/></linearGradient>
</defs>
<path d="M27.6 0.5 C42.8 0.5 55 12 55 26.5 C55 37.5 48.8 45 45.2 52.5 C43 57 41.6 61.5 41.4 67.2 L13.8 67.2 C13.6 61.5 12.2 57 10 52.5 C6.4 45 0.4 37.5 0.4 26.5 C0.4 12 12.4 0.5 27.6 0.5 Z" fill="url(#bg1)" stroke="#a6a6a6" stroke-width="0.7"/>
<path d="M27.6 0.5 C42.8 0.5 55 12 55 26.5 C55 37.5 48.8 45 45.2 52.5 C43 57 41.6 61.5 41.4 67.2 L13.8 67.2 C13.6 61.5 12.2 57 10 52.5 C6.4 45 0.4 37.5 0.4 26.5 C0.4 12 12.4 0.5 27.6 0.5 Z" fill="url(#sh1)"/>
<ellipse cx="21" cy="20" rx="16" ry="17" fill="url(#hl2)"/><path d="M27.6 0.5 C42.8 0.5 55 12 55 26.5 C55 37.5 48.8 45 45.2 52.5 C43 57 41.6 61.5 41.4 67.2 L13.8 67.2 C13.6 61.5 12.2 57 10 52.5 C6.4 45 0.4 37.5 0.4 26.5 C0.4 12 12.4 0.5 27.6 0.5 Z" fill="url(#eg1)"/><path d="M7.2 17 C10 9.6 16.4 6.2 21 5.6 C15 9.4 11.6 15.4 10.8 24 C10.4 28 11.6 33 13 35.6 C8.4 31.6 5.4 23.6 7.2 17 Z" fill="url(#hl1)"/>
<path d="M22 4.8 C30 3.2 38 6 41 9 C34 6.4 28 6.2 22 7.6 Z" fill="#fff" opacity="0.35"/>
<rect x="13.2" y="66.8" width="28.8" height="3.6" rx="1.2" fill="url(#bs1)"/>
<rect x="12.6" y="70.2" width="30" height="1.2" fill="url(#bs2)"/>
<rect x="12.4" y="71.2" width="30.4" height="3.4" rx="1.6" fill="url(#bs1)"/>
<rect x="13" y="74.4" width="29.4" height="1.2" fill="url(#bs2)"/>
<rect x="12.8" y="75.4" width="29.8" height="3.4" rx="1.6" fill="url(#bs1)"/>
<rect x="13.4" y="78.6" width="28.6" height="1.2" fill="url(#bs2)"/>
<rect x="13.2" y="79.6" width="29" height="3.4" rx="1.6" fill="url(#bs1)"/>
<rect x="13.8" y="82.8" width="27.8" height="1.2" fill="url(#bs2)"/>
<rect x="13.6" y="83.8" width="28.2" height="3.4" rx="1.6" fill="url(#bs1)"/>
<path d="M14.4 87 L41 87 L36.4 88.9 L19 88.9 Z" fill="#8c8c8c"/>
<path d="M20 88.4 L35 88.4 L33.6 91.6 Q27.6 92.6 21.4 91.6 Z" fill="#262626"/></svg>
<span class="t" style="left:556.40px;top:401.00px;font-size:9.6px;color:#1f1f1f;transform:scale(0.862,1.05);">Ind2_2-State</span>
<div class="a" style="left:539px;top:301px;width:106px;height:117.5px;border:3.7px solid #ed1c24"></div>
<div class="a" style="left:535.3px;top:423px;width:88.7px;height:22.4px;overflow:hidden"><div class="a" style="left:0;top:0;width:88.7px;height:60px;border-radius:8px;background:linear-gradient(#2a2a2a,#1a1a1a 40%);box-shadow:inset 0 0 0 1px #171717"></div><div class="a" style="left:5.6px;top:5px;width:77.6px;height:50px;border-radius:3.5px;background:linear-gradient(#a39d9d 0,#858080 1.6px,#7f7a7a 30%);box-shadow:0 0 0 1.2px #3b3b3b"></div><div class="a" style="left:14.9px;top:12.8px;width:59px;height:59px;border-radius:50%;border:1px solid #b2b2b2;background:#e7e7e7;box-shadow:0 0 0 2.2px #dadada,0 0 0 3px #4e4a4a"></div></div>
<div class="a" style="left:521px;top:445.4px;width:224px;height:18px;background:#d6d6d6;"></div>
<svg class="a" style="left:531px;top:450.4px;" width="12.4" height="12.4" viewBox="0 0 12.4 12.4"><defs><linearGradient id="cb1" x1="0" y1="0" x2="0" y2="1"><stop offset="0" stop-color="#aaa"/><stop offset="1" stop-color="#7a7a7a"/></linearGradient></defs><circle cx="6.1" cy="6" r="5.6" fill="url(#cb1)" stroke="#8a8a8a" stroke-width="0.5"/><rect x="3.2" y="5" width="5.8" height="2" fill="#f2f2f2"/></svg>
<svg class="a" style="left:721.8px;top:450.8px;" width="12.4" height="12.4" viewBox="0 0 12.4 12.4"><circle cx="6.1" cy="6" r="5.7" fill="url(#cb1)" stroke="#8a8a8a" stroke-width="0.5"/><rect x="3" y="5" width="6.2" height="2" fill="#f2f2f2"/><rect x="5.1" y="2.9" width="2" height="6.2" fill="#f2f2f2"/></svg>
<div class="a" style="left:549px;top:455.4px;width:167.4px;height:3.6px;background:#e9e9e9;border:1px solid #9c9c9c;border-radius:2px"></div>
<div class="a" style="left:623.2px;top:451.2px;width:18.8px;height:11.2px;background:linear-gradient(#b9b9b9,#8f8f8f 60%,#7c7c7c);border:1px solid #8a8a8a;border-radius:2.5px"></div>
<div class="a" style="left:631.6px;top:452.4px;width:1.2px;height:8.8px;background:#f4f4f4;"></div>
<div class="a" style="left:745.6px;top:83.5px;width:1.6px;height:380px;background:#505050;"></div>
<div class="a" style="left:742.4px;top:246px;width:2.6px;height:217.5px;background:linear-gradient(90deg,#dcdcdc,#bebebe);"></div>
<div class="a" style="left:746.4px;top:83.3px;width:12.6px;height:380.2px;background:#555;"></div>
<div class="a" style="left:747px;top:83.6px;width:12px;height:236.4px;background:;background:linear-gradient(90deg,#cfcfcf 0,#e0e2e6 2.5px,#eef0f4 6px,#f3f5f8 100%);"></div>
<div class="a" style="left:746.5px;top:151px;width:12.5px;height:1.2px;background:#6a6a6a;"></div>
<div class="a" style="left:746.5px;top:224.4px;width:12.5px;height:1.2px;background:#6a6a6a;"></div>
<span class="t" style="left:762px;top:99.4px;font-size:9.6px;line-height:16px;color:#2a2a2a;transform-origin:0 0;transform:rotate(90deg) scaleX(0.872);">Property Grid</span>
<span class="t" style="left:762px;top:166.8px;font-size:9.6px;line-height:16px;color:#2a2a2a;transform-origin:0 0;transform:rotate(90deg) scaleX(0.884);">Object Browser</span>
<span class="t" style="left:762px;top:244.2px;font-size:9.6px;line-height:16px;color:#2a2a2a;transform-origin:0 0;transform:rotate(90deg) scaleX(0.892);">Component Library</span>
<svg class="a" style="left:750px;top:85px;" width="9" height="11" viewBox="0 0 9 11"><rect x="0.6" y="0.6" width="6.4" height="9" fill="#fbfbfb" stroke="#8f9aae" stroke-width="0.6"/><path d="M3.4 2.6 Q6.6 4 7.4 9.6 L5.6 10 Q4.6 5.6 2.6 4 Z" fill="#f2c230" stroke="#b98a10" stroke-width="0.4"/></svg>
<svg class="a" style="left:750px;top:155px;" width="9" height="9" viewBox="0 0 9 9"><rect x="2.2" y="1.2" width="6.2" height="5.8" fill="#eaf2fc" stroke="#5f86c8" stroke-width="0.8"/><path d="M0.6 0.6 L3.4 3.4" stroke="#c89a3a" stroke-width="1.2"/></svg>
<svg class="a" style="left:750px;top:228.4px;" width="9" height="11" viewBox="0 0 9 11"><rect x="0.3" y="0.2" width="8.5" height="10.4" fill="#2a5a88"/><path d="M0.3 1.2 L8.8 1.2 M0.3 3.9 L8.8 3.9 M0.3 6.5 L8.8 6.5 M0.3 9.1 L8.8 9.1" stroke="#a4c0da" stroke-width="0.9"/><path d="M7.2 0.2 L7.2 10.6" stroke="#1c3f60" stroke-width="0.5"/></svg>
<div class="a" style="left:746.2px;top:224.1px;width:30px;height:104.4px;border:3.9px solid #ed1c24"></div>
</div>
</body></html>
